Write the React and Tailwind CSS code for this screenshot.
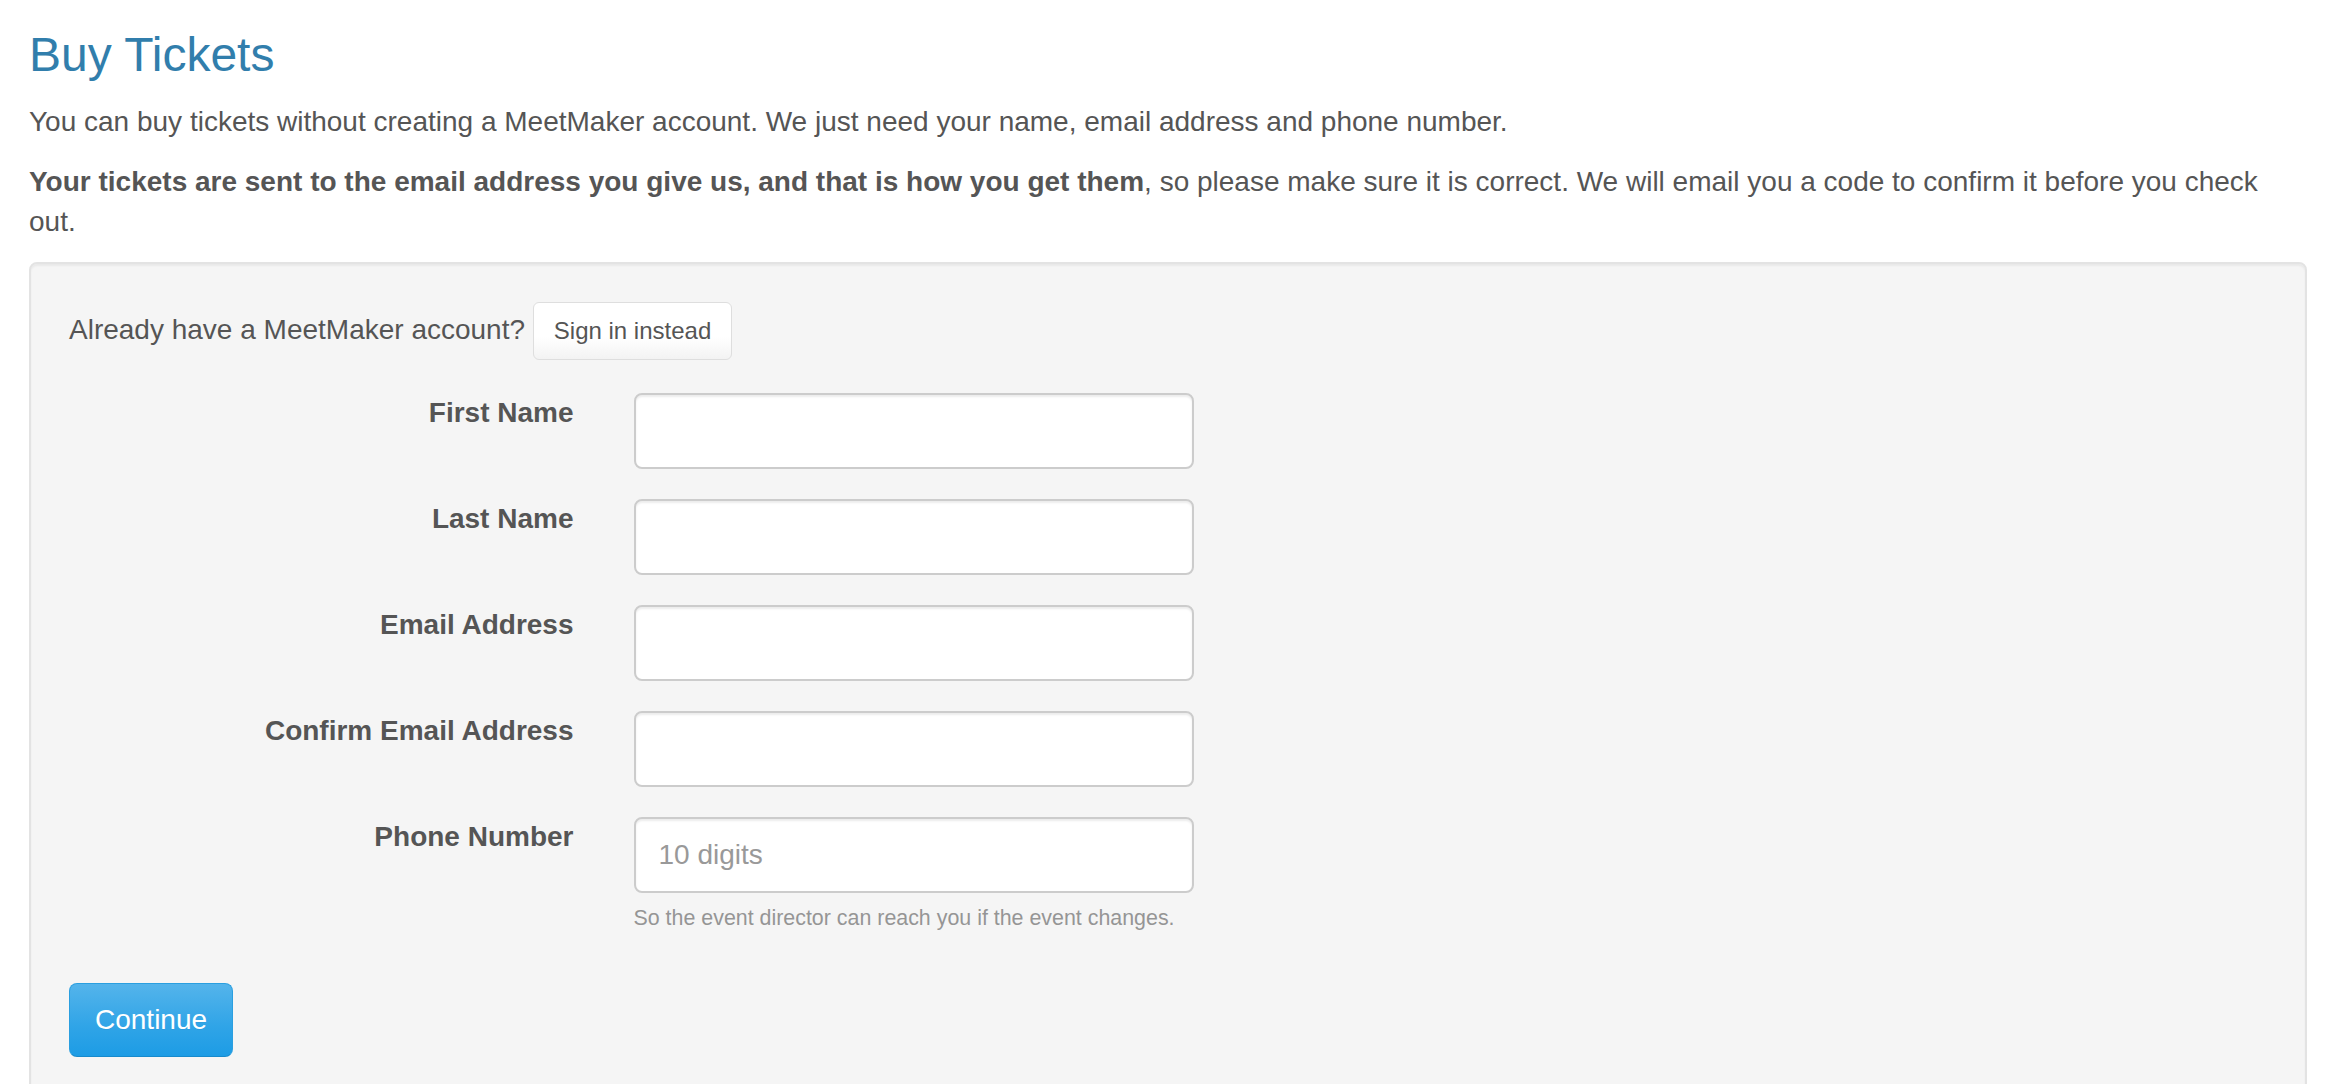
import { useState } from 'react';

const fields = [
  { id: 'firstName', label: 'First Name', type: 'text' },
  { id: 'lastName', label: 'Last Name', type: 'text' },
  { id: 'email', label: 'Email Address', type: 'email' },
  { id: 'confirmEmail', label: 'Confirm Email Address', type: 'email' },
  {
    id: 'phone',
    label: 'Phone Number',
    type: 'tel',
    placeholder: '10 digits',
    help: 'So the event director can reach you if the event changes.',
  },
];

export default function App() {
  const [values, setValues] = useState({});

  const handleChange = (id) => (e) => {
    setValues({ ...values, [id]: e.target.value });
  };

  return (
    <div className="h-screen overflow-hidden bg-white font-['Liberation_Sans',Arial,sans-serif] text-[28px] leading-[40px] text-[#555555]">
      <div className="px-[29px] pt-[29px]">
        <h3 className="mb-[20px] text-[48px] font-normal leading-[1.1] text-[#317eac]">Buy Tickets</h3>
        <p className="mb-[20px]">
          You can buy tickets without creating a MeetMaker account. We just need your name, email address and phone number.
        </p>
        <p className="mb-[20px]">
          <strong className="font-bold">
            Your tickets are sent to the email address you give us, and that is how you get them
          </strong>
          , so please make sure it is correct. We will email you a code to confirm it before you check out.
        </p>

        <form
          className="rounded-[8px] border-2 border-[#e3e3e3] bg-[#f5f5f5] p-[38px] shadow-[inset_0_2px_2px_rgba(0,0,0,0.05)]"
          onSubmit={(e) => e.preventDefault()}
        >
          <div className="mb-[33px]">
            Already have a MeetMaker account?{' '}
            <button
              type="button"
              className="inline-block rounded-[6px] border border-[#dedede] bg-[linear-gradient(#ffffff,#ffffff_60%,#f3f3f3)] px-[20px] py-[10px] align-baseline text-[24px] leading-[36px] text-[#555555]"
            >
              Sign in instead
            </button>
          </div>

          <div className="-mx-[30px]">
            {fields.map((f) => (
              <div key={f.id} className="mb-[30px] flex">
                <label htmlFor={f.id} className="w-1/4 shrink-0 px-[30px] text-right font-bold">
                  {f.label}
                </label>
                <div className="px-[30px]">
                  <input
                    id={f.id}
                    type={f.type}
                    placeholder={f.placeholder}
                    value={values[f.id] || ''}
                    onChange={handleChange(f.id)}
                    className="block h-[76px] w-[560px] rounded-[8px] border-2 border-[#cccccc] bg-white px-[23px] text-[28px] leading-[40px] text-[#555555] shadow-[inset_0_2px_2px_rgba(0,0,0,0.075)] outline-none placeholder:text-[#999999]"
                  />
                  {f.help && (
                    <p className="mt-[10px] mb-[20px] text-[21.4px] leading-[30px] text-[#959595]">{f.help}</p>
                  )}
                </div>
              </div>
            ))}
          </div>

          <button
            type="submit"
            className="rounded-[8px] border border-[#2a9fe0] border-b-[#178acc] bg-[linear-gradient(#54b4eb,#2fa4e7_60%,#1d9ce5)] px-[25px] py-[16px] text-[28px] leading-[40px] text-white [text-shadow:0_1px_0_rgba(0,0,0,0.05)]"
          >
            Continue
          </button>
        </form>
      </div>
    </div>
  );
}
